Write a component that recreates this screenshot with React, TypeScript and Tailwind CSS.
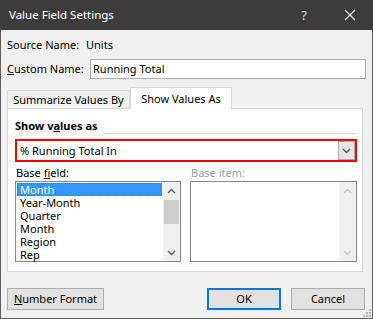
const FONT = { fontFamily: '"Noto Sans", "Open Sans", sans-serif' };

function Chevron({ dir, color }: { dir: 'up' | 'down'; color: string }) {
  return (
    <svg width="9" height="6" viewBox="0 0 9 6">
      <path
        d={dir === 'up' ? 'M1 5 L4.5 1.5 L8 5' : 'M1 1 L4.5 4.5 L8 1'}
        fill="none"
        stroke={color}
        strokeWidth="1.4"
      />
    </svg>
  );
}

function ScrollBar({ disabled }: { disabled?: boolean }) {
  const c = disabled ? '#c8c8c8' : '#606060';
  return (
    <div className="flex h-full w-[17px] flex-col bg-[#f0f0f0]">
      <div className="flex h-[17px] items-center justify-center">
        <Chevron dir="up" color={c} />
      </div>
      <div className="flex-1">
        {!disabled && <div className="mx-auto mt-[1px] h-[24px] w-[15px] bg-[#cdcdcd]" />}
      </div>
      <div className="flex h-[17px] items-center justify-center">
        <Chevron dir="down" color={c} />
      </div>
    </div>
  );
}

const FIELDS = ['Month', 'Year-Month', 'Quarter', 'Month', 'Region', 'Rep'];

export default function App() {
  return (
    <div
      className="relative flex h-[319px] w-[373px] flex-col whitespace-nowrap border-x border-b border-[#5f5f5f] bg-[#f0f0f0] text-[11px] leading-[14px] text-black"
      style={FONT}
    >
      <div className="-mx-[1px] flex h-[30px] shrink-0 items-center justify-between bg-[#3e3c3a] pl-[9px] text-white">
        <span className="text-[11.5px]">Value Field Settings</span>
        <div className="flex items-center">
          <span className="w-[46px] text-center text-[13px] text-[#d8d8d8]">?</span>
          <svg width="46" height="30" viewBox="0 0 46 30">
            <path d="M18 10 L28 20 M28 10 L18 20" stroke="#e8e8e8" strokeWidth="1.2" />
          </svg>
        </div>
      </div>

      <div className="flex flex-1 flex-col px-[6px]">
        <div className="mt-[7px] flex h-[16px] items-center">
          <span className="w-[79px]">Source Name:</span>
          <span>Units</span>
        </div>
        <div className="mt-[6px] flex h-[20px] items-center">
          <span className="w-[83px]">
            <u>C</u>ustom Name:
          </span>
          <div className="flex h-[20px] w-[276px] items-center border border-[#abadb3] bg-white px-[2px]">
            Running Total
          </div>
        </div>

        <div className="mt-[8px] flex h-[21px] items-end">
          <div className="flex h-[18px] w-[123px] items-center justify-center border border-b-0 border-[#d9d9d9] bg-[#f0f0f0]">
            Summarize Values By
          </div>
          <div className="relative z-10 -mb-[1px] flex h-[22px] w-[102px] items-center justify-center border border-b-0 border-[#d9d9d9] bg-white">
            Show Values As
          </div>
        </div>

        <div className="flex h-[164px] w-[356px] flex-col border border-[#d9d9d9] bg-white pl-[7px]">
          <div className="mt-[9px] flex h-[16px] items-center">
            <span className="font-bold">
              Show v<u>a</u>lues as
            </span>
            <div className="ml-[4px] mr-[5px] mt-[14px] h-[1px] flex-1 bg-[#dcdcdc]" />
          </div>
          <div className="mt-[5px] flex h-[23px] w-[342px] items-center border-2 border-[#ff0000] bg-white pl-[3px]">
            <span className="flex-1">% Running Total In</span>
            <div className="flex h-[19px] w-[17px] items-center justify-center border border-[#acacac] bg-[#e5e5e5]">
              <Chevron dir="down" color="#555555" />
            </div>
          </div>
          <div className="mt-[3px] flex h-[15px] items-center">
            <span className="w-[176px] pl-[1px]">
              Base <u>f</u>ield:
            </span>
            <span className="text-[#a0a0a0]">Base item:</span>
          </div>
          <div className="mt-[1px] flex gap-[9px]">
            <div className="flex h-[81px] w-[166px] border border-[#828790] bg-white">
              <div className="flex-1 p-[1px] leading-[12px]">
                {FIELDS.map((f, i) => (
                  <div
                    key={i}
                    className={
                      i === 0
                        ? 'flex h-[13px] items-center border border-dotted border-[#b0601a] bg-[#3399ff] pl-[2px] text-white'
                        : 'flex h-[13px] items-center pl-[3px]'
                    }
                  >
                    {f}
                  </div>
                ))}
              </div>
              <ScrollBar />
            </div>
            <div className="flex h-[81px] w-[167px] justify-end border border-[#828790] bg-white">
              <ScrollBar disabled />
            </div>
          </div>
        </div>

        <div className="mt-[16px] flex h-[22px] items-center">
          <div className="flex h-[22px] w-[97px] items-center justify-center border border-[#adadad] bg-[#e1e1e1]">
            <span>
              <u>N</u>umber Format
            </span>
          </div>
          <div className="ml-[103px] flex h-[22px] w-[74px] items-center justify-center border-2 border-[#0078d7] bg-[#e1e1e1]">
            OK
          </div>
          <div className="ml-[10px] flex h-[22px] w-[74px] items-center justify-center border border-[#adadad] bg-[#e1e1e1]">
            Cancel
          </div>
        </div>
      </div>

      <svg className="absolute bottom-[1px] right-[1px]" width="11" height="11" viewBox="0 0 11 11">
        {[
          [9, 1],
          [9, 4],
          [6, 4],
          [9, 7],
          [6, 7],
          [3, 7],
        ].map(([x, y], i) => (
          <rect key={i} x={x} y={y + 2} width="2" height="2" fill="#b0b0b0" />
        ))}
      </svg>
    </div>
  );
}
